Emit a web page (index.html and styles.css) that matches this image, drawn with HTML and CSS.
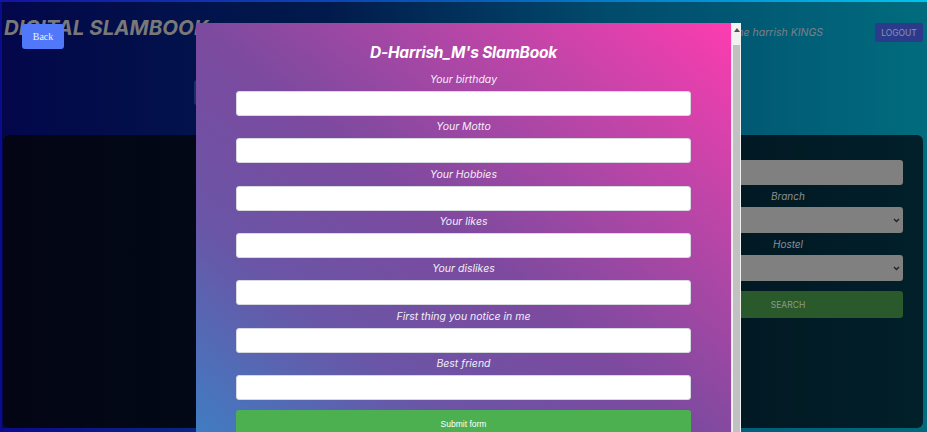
FILE: index.html
```html
<!DOCTYPE html>
<html lang="en">
<head>
<meta charset="utf-8">
<title>Digital Slambook</title>
<link rel="stylesheet" href="styles.css">
</head>
<body>
  <div class="topline"></div>
  <div class="page">
    <header class="header">
      <div class="bar">
        <h1 class="brand">DIGITAL SLAMBOOK</h1>
        <div class="user">
          <span class="welcome">Welcome to the harrish KINGS</span>
          <button class="logout" type="button">LOGOUT</button>
        </div>
      </div>
      <div class="searchrow"><div class="ghost"></div></div>
    </header>
    <main class="card">
      <form class="filter">
        <input class="field" type="text">
        <label class="flabel">Branch</label>
        <div class="select"><svg class="chev" width="7" height="5" viewBox="0 0 7 5"><path d="M1 1l2.5 2.5L6 1" fill="none" stroke="#222" stroke-width="1.4"/></svg></div>
        <label class="flabel">Hostel</label>
        <div class="select"><svg class="chev" width="7" height="5" viewBox="0 0 7 5"><path d="M1 1l2.5 2.5L6 1" fill="none" stroke="#222" stroke-width="1.4"/></svg></div>
        <button class="search" type="button">SEARCH</button>
      </form>
    </main>
  </div>

  <button class="back" type="button">Back</button>

  <div class="modal">
    <div class="sheet">
      <h2 class="title">D-Harrish_M's SlamBook</h2>
      <div class="group"><label class="label">Your birthday</label><input class="input" type="text"></div>
      <div class="group"><label class="label">Your Motto</label><input class="input" type="text"></div>
      <div class="group"><label class="label">Your Hobbies</label><input class="input" type="text"></div>
      <div class="group"><label class="label">Your likes</label><input class="input" type="text"></div>
      <div class="group"><label class="label">Your dislikes</label><input class="input" type="text"></div>
      <div class="group"><label class="label">First thing you notice in me</label><input class="input" type="text"></div>
      <div class="group"><label class="label">Best friend</label><input class="input" type="text"></div>
      <button class="submit" type="button">Submit form</button>
    </div>
    <div class="scrollbar">
      <div class="arrow"><svg width="6" height="4" viewBox="0 0 6 4"><path d="M0 4L3 0L6 4Z" fill="#505050"/></svg></div>
      <div class="thumb"></div>
    </div>
  </div>
</body>
</html>
```

FILE: styles.css
```css
html, body {
  margin: 0;
  padding: 0;
}
body {
  width: 927px;
  height: 432px;
  overflow: hidden;
  position: relative;
  background: linear-gradient(90deg, #0b0b8e 0%, #01507a 50%, #00697e 100%);
  font-family: "Inter", "Open Sans", sans-serif;
}
.topline {
  height: 2px;
  background: linear-gradient(90deg, #1414a0 0%, #0a5ab8 50%, #00c4ee 100%);
}
.page {
  margin-left: 2px;
  background: linear-gradient(90deg, #03074a 0%, #011a4c 35%, #014a6c 65%, #016c7e 100%);
}
.header {
  height: 133px;
  display: flex;
  flex-direction: column;
}
.bar {
  display: flex;
  justify-content: space-between;
  align-items: flex-start;
  padding: 13px 4px 0 2px;
}
.brand {
  margin: 0;
  font-family: "Inter", sans-serif;
  font-style: italic;
  font-weight: 700;
  font-size: 20.5px;
  line-height: 26px;
  color: #797979;
  letter-spacing: 0;
}
.user {
  display: flex;
  align-items: center;
  gap: 52px;
  padding-top: 8px;
}
.welcome {
  font-style: italic;
  font-size: 10.5px;
  color: #7c8088;
}
.logout {
  width: 48px;
  height: 19px;
  border: none;
  border-radius: 2px;
  background: #2c3a8c;
  color: #8d93b4;
  font-family: "Inter", sans-serif;
  font-size: 8.5px;
  padding: 0;
}
.searchrow {
  padding: 38px 0 0 192px;
}
.ghost {
  width: 300px;
  height: 25px;
  border-radius: 3px;
  background: rgba(90, 110, 190, 0.3);
}
.card {
  height: 293px;
  margin: 0 4px 0 1px;
  border-radius: 6px;
  background: linear-gradient(90deg, #030515 0%, #020c18 45%, #01202a 100%);
  display: flex;
  justify-content: flex-end;
  padding: 25px 20px 0 0;
  box-sizing: border-box;
}
.filter {
  width: 230px;
  display: flex;
  flex-direction: column;
  align-items: stretch;
}
.field, .select {
  height: 25px;
  box-sizing: border-box;
  border: none;
  border-radius: 3px;
  background: #808080;
  margin: 0;
  position: relative;
}
.select {
  height: 26px;
}
.chev {
  position: absolute;
  right: 3px;
  top: 11px;
}
.flabel {
  text-align: center;
  font-style: italic;
  font-size: 10px;
  line-height: 12px;
  color: #8c9096;
  padding: 5px 0 5px;
}
.search {
  margin-top: 10px;
  height: 27px;
  border: none;
  border-radius: 3px;
  background: #2a5a2c;
  color: #8a9a8a;
  font-family: "Inter", sans-serif;
  font-size: 8.5px;
}
.back {
  position: absolute;
  left: 22px;
  top: 24px;
  width: 42px;
  height: 25px;
  border: none;
  border-radius: 3px;
  background: #5078f8;
  color: #f0f2ff;
  font-family: "Liberation Serif", serif;
  font-size: 10px;
  padding: 0;
}
.modal {
  position: absolute;
  left: 196px;
  top: 23px;
  width: 545px;
  height: 440px;
  display: flex;
}
.sheet {
  flex: 1;
  background: linear-gradient(to top right, #3a82c6 0%, #6a55a6 28%, #7c4a9f 50%, #c045a8 78%, #fd3cb0 100%);
  display: flex;
  flex-direction: column;
  align-items: center;
  padding-top: 20px;
}
.title {
  margin: 0 0 10px;
  font-style: italic;
  font-weight: 700;
  font-size: 15.5px;
  line-height: 20px;
  color: #ffffff;
  letter-spacing: -0.2px;
}
.group {
  display: flex;
  flex-direction: column;
  align-items: center;
  width: 455px;
  margin-bottom: 4.33px;
}
.label {
  font-style: italic;
  font-size: 10.5px;
  line-height: 14px;
  color: #f2eef8;
  margin-bottom: 4px;
}
.input {
  width: 455px;
  height: 25px;
  box-sizing: border-box;
  border: 1px solid #d8d8e0;
  border-radius: 3px;
  background: #ffffff;
  margin: 0;
}
.submit {
  margin-top: 6px;
  width: 455px;
  height: 30px;
  border: none;
  border-radius: 3px;
  background: #4caf50;
  color: #ffffff;
  font-family: "Liberation Sans", Arial, sans-serif;
  font-size: 8.5px;
  padding: 0 0 2px;
}
.scrollbar {
  width: 10px;
  background: #f1f1f1;
  display: flex;
  flex-direction: column;
  align-items: center;
  border-left: 1px solid #e6e6e6;
  box-sizing: border-box;
}
.arrow {
  height: 14px;
  display: flex;
  align-items: center;
  justify-content: center;
}
.thumb {
  margin-top: 8px;
  width: 7px;
  flex: 1;
  background: #c1c1c1;
}
```
